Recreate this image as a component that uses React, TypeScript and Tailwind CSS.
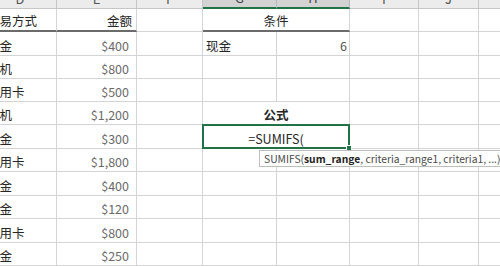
import type { ReactNode } from "react";

const COLS = ["D", "E", "F", "G", "H", "I", "J", "K"];

const methods = ["现金", "手机", "信用卡", "手机", "现金", "信用卡", "现金", "现金", "信用卡", "现金"];
const amounts = ["$400", "$800", "$500", "$1,200", "$300", "$1,800", "$400", "$120", "$800", "$250"];

const cell = "border-r border-b border-[#d4d4d4] flex items-end leading-[16px] pb-[1px] whitespace-nowrap overflow-hidden";
const thick = "border-r border-b-2 border-r-[#d4d4d4] border-b-[#6b6b6b] flex items-end leading-[16px] pb-[1px] whitespace-nowrap";

const Cell = ({ className = "", children }: { className?: string; children?: ReactNode }) => (
  <div className={`${cell} ${className}`}>{children}</div>
);

const App = () => {
  return (
    <div className="w-[500px] h-[266px] overflow-hidden bg-white relative">
      <div
        className="-ml-[16px] -mt-[11px] grid grid-cols-[73px_80px_66px_74px_73px_69px_60px_80px] grid-rows-[20px_23px_24px_23px_23px_23px_24px_23px_24px_23px_24px_23px] text-[12.5px] text-[#262626]"
        style={{ fontFamily: '"Noto Sans CJK SC", "Noto Sans", sans-serif' }}
      >
        {/* column headers */}
        {COLS.map((c) => {
          const active = c === "G" || c === "H";
          return (
            <div
              key={c}
              className={`flex items-center justify-center border-r text-[13px] ${
                active
                  ? "bg-[#d3d3d3] text-[#444] border-r-[#b8b8b8] border-b-2 border-b-[#217346]"
                  : "bg-[#ececec] text-[#555] border-r-[#c6c6c6] border-b border-b-[#c6c6c6]"
              }`}
            >
              {c}
            </div>
          );
        })}

        {/* row 1: table headers */}
        <div className={`${thick} pl-[3px]`}>交易方式</div>
        <div className={`${thick} justify-end pr-[4px]`}>金额</div>
        <Cell />
        <div className={`${thick} col-span-2 justify-center`}>条件</div>
        <Cell />
        <Cell />
        <Cell />

        {methods.map((m, i) => {
          const row = i + 2;
          return [
            <Cell key={`d${row}`} className="pl-[3px]">
              {m}
            </Cell>,
            <Cell key={`e${row}`} className="justify-end pr-[7px] text-[#6a6a6a]">
              {amounts[i]}
            </Cell>,
            <Cell key={`f${row}`} />,
            ...(row === 2
              ? [
                  <Cell key="g2" className="pl-[3px]">
                    现金
                  </Cell>,
                  <Cell key="h2" className="justify-end pr-[2px] text-[#555]">
                    6
                  </Cell>,
                ]
              : row === 5
                ? [
                    <Cell key="g5" className="col-span-2 justify-center font-bold">
                      公式
                    </Cell>,
                  ]
                : row === 6
                  ? [
                      <div key="g6" className={`${cell} col-span-2 justify-center relative overflow-visible z-10`}>
                        =SUMIFS(
                        <span className="absolute -top-[1px] -left-[1px] -right-[1px] -bottom-[1px] border-2 border-[#217346]" />
                        <span className="absolute -right-[3px] -bottom-[3px] w-[6px] h-[6px] bg-[#217346] border border-white" />
                        <div
                          className="absolute top-[calc(100%+2px)] left-[56px] h-[17px] px-[4px] flex items-center bg-white border border-[#bdbdbd] text-[10.3px] text-[#4a4a4a] whitespace-nowrap"
                          style={{ fontFamily: '"Noto Sans CJK SC", sans-serif' }}
                        >
                          SUMIFS(<b className="text-[#222]">sum_range</b>, criteria_range1, criteria1, ...)
                        </div>
                      </div>,
                    ]
                  : [<Cell key={`g${row}`} />, <Cell key={`h${row}`} />]),
            <Cell key={`i${row}`} />,
            <Cell key={`j${row}`} />,
            <Cell key={`k${row}`} />,
          ];
        })}
      </div>
    </div>
  );
};

export default App;
